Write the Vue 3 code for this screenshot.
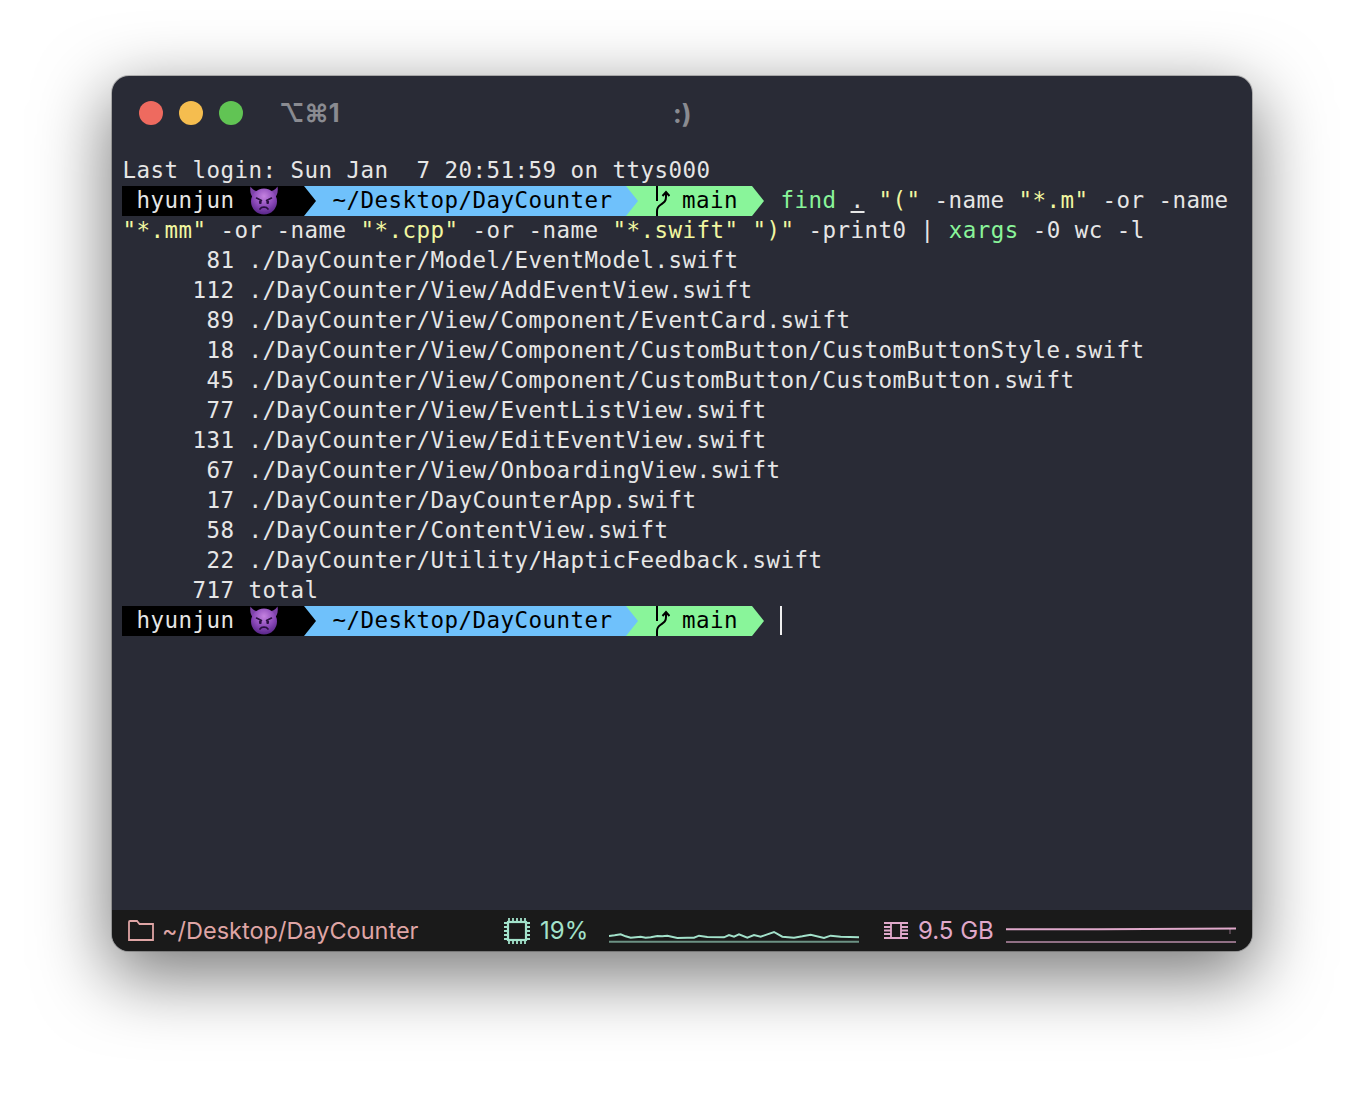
<script setup>
const login = 'Last login: Sun Jan  7 20:51:59 on ttys000'
const rows = [
  ['81', './DayCounter/Model/EventModel.swift'],
  ['112', './DayCounter/View/AddEventView.swift'],
  ['89', './DayCounter/View/Component/EventCard.swift'],
  ['18', './DayCounter/View/Component/CustomButton/CustomButtonStyle.swift'],
  ['45', './DayCounter/View/Component/CustomButton/CustomButton.swift'],
  ['77', './DayCounter/View/EventListView.swift'],
  ['131', './DayCounter/View/EditEventView.swift'],
  ['67', './DayCounter/View/OnboardingView.swift'],
  ['17', './DayCounter/DayCounterApp.swift'],
  ['58', './DayCounter/ContentView.swift'],
  ['22', './DayCounter/Utility/HapticFeedback.swift'],
  ['717', 'total']
]
const outputLines = rows.map(([n, p]) => n.padStart(8, ' ') + ' ' + p)
const prompts = [0, 1]
const cpuPins = [0, 1, 2, 3, 4]
const spark = '355,108 372,106 390,103 405,109 420,113 450,110 465,113 480,112 500,108 515,109 530,107 560,114 590,113 610,113 625,107 650,111 700,112 715,105 730,110 745,103 770,113 790,105 810,110 830,103 850,96 875,110 910,113 935,109 960,104 1000,114 1020,107 1050,110 1105,112'
</script>

<template>
  <div class="page">
    <div class="window">
      <header class="titlebar">
        <div class="lights">
          <span class="light red"></span>
          <span class="light amber"></span>
          <span class="light green"></span>
        </div>
        <span class="shortcut">⌥⌘1</span>
        <span class="title">:)</span>
      </header>

      <main class="term">
        <div class="line">{{ login }}</div>

        <template v-for="p in prompts" :key="p">
          <div class="prompt">
            <div class="seg seg-user">
              <span>hyunjun</span>
              <svg class="devil" viewBox="0 0 30 30" aria-hidden="true">
                <defs>
                  <radialGradient :id="`face${p}`" cx="50%" cy="30%" r="75%">
                    <stop offset="0" stop-color="#c583e0" />
                    <stop offset=".55" stop-color="#8a48b8" />
                    <stop offset="1" stop-color="#4f2080" />
                  </radialGradient>
                </defs>
                <path d="M1.5 0.5 C0.5 6 2 11 6 13 L10.5 5.5 C7 5.5 3.5 4 1.5 0.5 Z M28.5 0.5 C29.5 6 28 11 24 13 L19.5 5.5 C23 5.5 26.5 4 28.5 0.5 Z" fill="#7d43a8" />
                <circle cx="15" cy="15.5" r="13" :fill="`url(#face${p})`" />
                <path d="M7.5 12 L12.5 14.5 M22.5 12 L17.5 14.5" stroke="#2a1040" stroke-width="1.6" stroke-linecap="round" />
                <rect x="10" y="14.5" width="2.6" height="3.6" rx="1" fill="#2a1040" />
                <rect x="17.4" y="14.5" width="2.6" height="3.6" rx="1" fill="#2a1040" />
                <path d="M11 23 C12.5 20.5 17.5 20.5 19 23" fill="none" stroke="#2a1040" stroke-width="1.7" stroke-linecap="round" />
              </svg>
            </div>
            <div class="seg seg-path">~/Desktop/DayCounter</div>
            <div class="seg seg-git">
              <svg class="branch" viewBox="0 0 16 30" aria-hidden="true">
                <path d="M3 0 V15 M12 6 V11 C12 15.5 10 16.5 7 18.5 C4 20.5 3 22 3 25 V30" fill="none" stroke="#000" stroke-width="2" />
                <path d="M8.5 10 L12 6 L15.5 10" fill="none" stroke="#000" stroke-width="2" />
              </svg>
              <span>main</span>
            </div>
            <div v-if="p === 0" class="cmd"><span class="ok">find</span> <span class="ul">.</span> <span class="str">"("</span> -name <span class="str">"*.m"</span> -or -name</div>
            <span v-else class="cursor"></span>
          </div>
          <template v-if="p === 0">
            <div class="line"><span class="str">"*.mm"</span> -or -name <span class="str">"*.cpp"</span> -or -name <span class="str">"*.swift"</span> <span class="str">")"</span> -print0 | <span class="ok">xargs</span> -0 wc -l</div>
            <div v-for="o in outputLines" :key="o" class="line">{{ o }}</div>
          </template>
        </template>
      </main>

      <footer class="status">
        <div class="stat stat-dir">
          <svg class="folder" viewBox="0 0 26 21" aria-hidden="true">
            <path d="M1 20 V2 C1 1.4 1.4 1 2 1 H9 L11.5 4 H25 V20 H1 Z" fill="none" stroke="currentColor" stroke-width="1.8" />
          </svg>
          <span>~/Desktop/DayCounter</span>
        </div>

        <div class="stat stat-cpu">
          <svg class="cpu" viewBox="0 0 26 26" aria-hidden="true">
            <rect x="4" y="4" width="18" height="18" fill="none" stroke="currentColor" stroke-width="2.2" />
            <g v-for="i in cpuPins" :key="i" stroke="currentColor" stroke-width="1.8">
              <path :d="`M${5 + i * 4} 0 V4 M${5 + i * 4} 22 V26 M0 ${5 + i * 4} H4 M22 ${5 + i * 4} H26`" />
            </g>
          </svg>
          <span class="value">19%</span>
          <svg class="graph" viewBox="355 90 750 60" preserveAspectRatio="none" aria-hidden="true">
            <polyline :points="spark" fill="none" stroke="currentColor" stroke-width="6" />
            <path d="M355 125.5 H1105" stroke="currentColor" stroke-width="6" opacity=".6" />
          </svg>
        </div>

        <div class="stat stat-mem">
          <svg class="mem" viewBox="0 0 24 17" aria-hidden="true">
            <path d="M7 1 H17 V16 H7 Z" fill="none" stroke="currentColor" stroke-width="1.8" />
            <path d="M0 1 H7 M0 5 H7 M0 8.5 H7 M0 12 H7 M0 16 H7 M17 1 H24 M17 5 H24 M17 8.5 H24 M17 12 H24 M17 16 H24" stroke="currentColor" stroke-width="1.8" />
          </svg>
          <span class="value">9.5 GB</span>
          <svg class="graph graph-mem" viewBox="0 0 230 20" preserveAspectRatio="none" aria-hidden="true">
            <path d="M0 8.3 H92 L140 8 L230 7.4" fill="none" stroke="currentColor" stroke-width="2" />
            <path d="M224 8 V13" stroke="currentColor" stroke-width=".8" opacity=".7" />
          </svg>
        </div>
      </footer>
    </div>
  </div>
</template>

<style scoped>
.page {
  box-sizing: border-box;
  width: 1364px;
  height: 1100px;
  padding-top: 76px;
  background: #fff;
  overflow: hidden;
}
.window {
  display: flex;
  flex-direction: column;
  width: 1140px;
  height: 875px;
  margin: 0 auto;
  border-radius: 17px;
  overflow: hidden;
  background: #292b36;
  box-shadow: 0 22px 70px 4px rgba(0, 0, 0, 0.52), 0 0 0 1px rgba(0, 0, 0, 0.22);
}
.titlebar {
  position: relative;
  display: flex;
  align-items: center;
  flex: none;
  height: 80px;
  padding: 0 0 6px 27px;
  box-sizing: border-box;
  font-family: "Inter", "Liberation Sans", sans-serif;
  font-weight: 700;
  color: #8a8b91;
}
.lights {
  display: flex;
  gap: 16px;
}
.light {
  width: 24px;
  height: 24px;
  border-radius: 50%;
}
.red { background: #ee6a5f; }
.amber { background: #f5bd4f; }
.green { background: #61c454; }
.shortcut {
  margin-left: 36px;
  font-size: 25px;
  line-height: 30px;
}
.title {
  position: absolute;
  left: 561px;
  top: 22px;
  font-size: 26px;
}
.term {
  flex: 1;
  font-family: "DejaVu Sans Mono", monospace;
  font-size: 22.5px;
  letter-spacing: 0.455px;
  line-height: 28px;
  color: #e6e6e6;
  white-space: pre;
}
.line {
  height: 30px;
  padding-left: 10.5px;
}
.prompt {
  display: flex;
  align-items: stretch;
  height: 30px;
  margin-left: 10px;
}
.seg {
  display: flex;
  align-items: flex-start;
  box-sizing: border-box;
  flex: none;
  height: 30px;
}
.seg-user {
  position: relative;
  z-index: 3;
  width: 194px;
  padding-left: 14.5px;
  background: #000;
  clip-path: polygon(0 0, 182px 0, 100% 50%, 182px 100%, 0 100%);
}
.devil {
  width: 30px;
  height: 30px;
  margin-left: 14px;
  flex: none;
}
.seg-path {
  position: relative;
  z-index: 2;
  width: 334px;
  margin-left: -12px;
  padding-left: 28.5px;
  color: #000;
  background: #6fc1fb;
  clip-path: polygon(0 0, 322px 0, 100% 50%, 322px 100%, 0 100%);
}
.seg-git {
  position: relative;
  z-index: 1;
  width: 138px;
  margin-left: -12px;
  padding-left: 28px;
  color: #000;
  background: #89f59a;
  clip-path: polygon(0 0, 126px 0, 100% 50%, 126px 100%, 0 100%);
}
.branch {
  width: 16px;
  height: 30px;
  margin-right: 12px;
  flex: none;
}
.cmd {
  margin-left: 16.5px;
}
.ok { color: #89f59a; }
.str { color: #f1f7a0; }
.ul {
  text-decoration: underline;
  text-underline-offset: 3px;
}
.cursor {
  width: 2px;
  height: 29px;
  margin-left: 16px;
  background: #f0f0f0;
}
.status {
  display: flex;
  align-items: stretch;
  flex: none;
  height: 41px;
  background: #1a1a1a;
  font-family: "Inter", "Liberation Sans", sans-serif;
  font-size: 24px;
}
.stat {
  display: flex;
  align-items: center;
  flex: none;
}
.stat-dir {
  width: 392px;
  padding-left: 16px;
  box-sizing: border-box;
  color: #dfa5a5;
  font-size: 23.5px;
}
.folder {
  width: 26px;
  height: 21px;
  margin-right: 8px;
}
.stat-cpu {
  width: 380px;
  color: #a3e2cb;
}
.cpu {
  width: 26px;
  height: 26px;
  margin-right: 10px;
}
.graph {
  width: 250px;
  height: 20px;
  margin-left: 21px;
  margin-bottom: 1px;
  align-self: flex-end;
}
.stat-mem {
  color: #e0a9cb;
}
.mem {
  width: 24px;
  height: 17px;
  margin-right: 10px;
}
.graph-mem {
  width: 230px;
  height: 22px;
  margin-left: 12px;
  margin-bottom: 8px;
  border-bottom: 2px solid rgba(224, 169, 203, 0.6);
  box-sizing: border-box;
}
</style>

<style>
html, body {
  margin: 0;
  background: #fff;
}
</style>
